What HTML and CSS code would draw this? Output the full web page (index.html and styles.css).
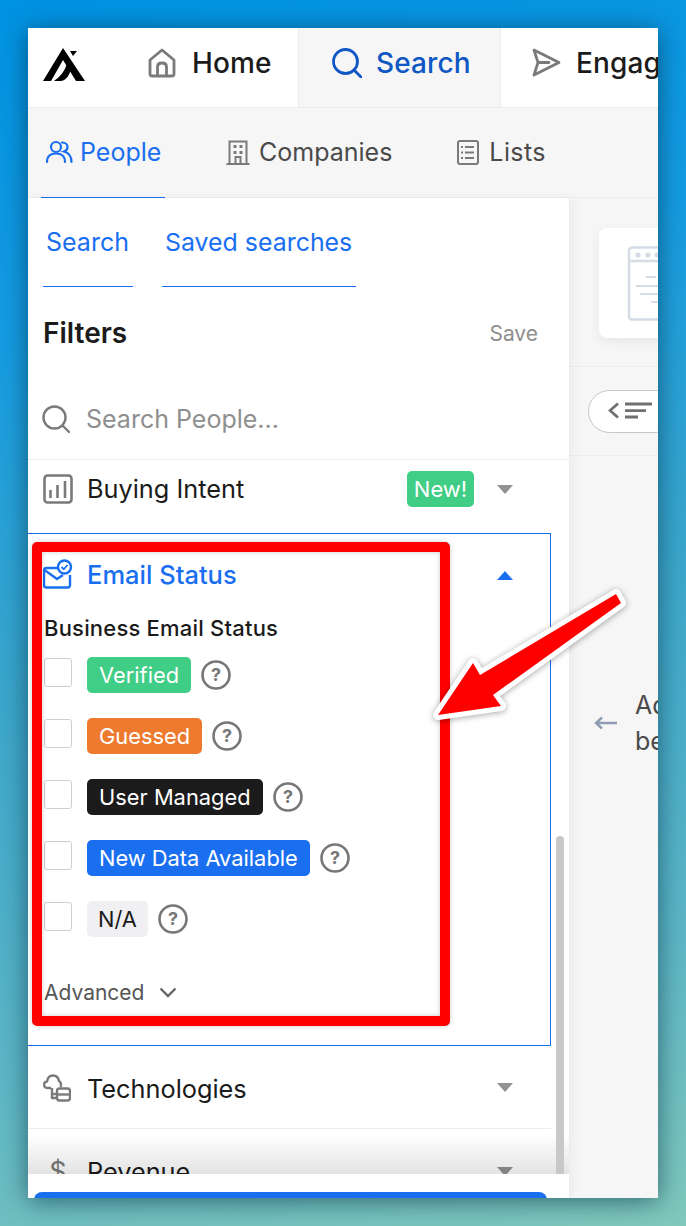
FILE: index.html
```html
<!DOCTYPE html>
<html lang="en">
<head>
<meta charset="utf-8">
<title>Search People</title>
<link rel="stylesheet" href="styles.css">
</head>
<body>
<div class="window">
  <header class="topbar">
    <div class="tab tab-home">
      <svg class="logo" viewBox="0 0 42 34" width="42" height="34"><path d="M0 34 L20 1 L42 34 H33 L20 13 L8 34Z" fill="#000"/><path d="M11 34 H18 C24 33 27 27 28 21 L24 15 C23 23 17 30 11 34Z" fill="#000"/><path d="M27 4 H34 L30 9Z" fill="#000"/></svg>
      <svg class="ic-main" viewBox="0 0 28 30" width="28" height="30"><path d="M2 12 L14 2 L26 12 V26 Q26 28 24 28 H4 Q2 28 2 26Z M9.500 28 V19 Q9.500 15 14 15 Q18.500 15 18.500 19 V28" fill="none" stroke="#7a7a7a" stroke-width="2.800" stroke-linejoin="round"/></svg>
      <span class="tab-label">Home</span>
    </div>
    <div class="tab tab-search">
      <svg viewBox="0 0 30 30" width="30" height="30"><circle cx="13.500" cy="13.500" r="12" fill="none" stroke="#0e57c4" stroke-width="2.800"/><path d="M22 22 L29 29" stroke="#0e57c4" stroke-width="2.800" stroke-linecap="round"/></svg>
      <span class="tab-label tab-label-active">Search</span>
    </div>
    <div class="tab tab-engage">
      <svg viewBox="0 0 30 30" width="30" height="30"><path d="M3 2 L28 14.500 L3 27 L7 14.500Z M7 14.500 H18" fill="none" stroke="#7a7a7a" stroke-width="2.800" stroke-linejoin="round" stroke-linecap="round"/></svg>
      <span class="tab-label">Engage</span>
    </div>
  </header>

  <nav class="subnav">
    <div class="sub sub-people">
      <svg viewBox="0 0 27 24" width="27" height="24"><g fill="none" stroke="#1a6ff0" stroke-width="2.200" stroke-linecap="round"><circle cx="10" cy="7" r="5"/><path d="M1 22 C1 16 5 13.500 10 13.500 C15 13.500 19 16 19 22"/><path d="M16 2.500 C20 2.500 21.500 5 21.500 7 C21.500 9.500 19.500 11 18 11.500 C22 12.500 25.500 15 25.500 22"/></g></svg>
      <span>People</span>
    </div>
    <div class="sub sub-companies">
      <svg viewBox="0 0 24 25" width="24" height="25"><g fill="none" stroke="#7a7a7a" stroke-width="2"><path d="M3.500 24 V1.500 H20.500 V24"/><path d="M0.500 24 H23.500"/><path d="M9.500 24 V17 H14.500 V24"/></g><g fill="#7a7a7a"><rect x="7.500" y="5" width="3" height="3"/><rect x="13.500" y="5" width="3" height="3"/><rect x="7.500" y="11" width="3" height="3"/><rect x="13.500" y="11" width="3" height="3"/></g></svg>
      <span>Companies</span>
    </div>
    <div class="sub sub-lists">
      <svg viewBox="0 0 22 25" width="22" height="25"><rect x="1" y="1" width="20" height="23" rx="2" fill="none" stroke="#7a7a7a" stroke-width="2"/><g stroke="#7a7a7a" stroke-width="1.800"><path d="M8 7 H17 M8 12.500 H17 M8 18 H17"/><path d="M4 7 H6 M4 12.500 H6 M4 18 H6"/></g></svg>
      <span class="sub-lists-label">Lists</span>
    </div>
  </nav>

  <div class="content">
    <aside class="sidebar">
      <div class="side-tabs">
        <span class="side-tab side-tab-search">Search</span>
        <span class="side-tab side-tab-saved">Saved searches</span>
      </div>
      <div class="filters-head">
        <span class="filters-title">Filters</span>
        <span class="filters-save">Save</span>
      </div>
      <div class="search-row">
        <svg viewBox="0 0 28 28" width="28" height="28"><circle cx="12.500" cy="12.500" r="11" fill="none" stroke="#7a7a7a" stroke-width="2.400"/><path d="M20.500 20.500 L27 27" stroke="#7a7a7a" stroke-width="2.400" stroke-linecap="round"/></svg>
        <span>Search People...</span>
      </div>
      <div class="scroll-area">
        <div class="filter filter-intent">
          <svg class="f-icon" viewBox="0 0 30 30" width="30" height="30"><rect x="1.500" y="1.500" width="27" height="27" rx="3" fill="none" stroke="#7a7a7a" stroke-width="2.600"/><path d="M7.500 24 V16 M14.500 24 V11 M22 24 V7" stroke="#7a7a7a" stroke-width="2.600"/></svg>
          <span class="f-name">Buying Intent</span>
          <span class="new-badge">New!</span>
          <span class="caret"></span>
        </div>
        <section class="filter-open">
          <div class="open-head">
            <svg class="f-icon" viewBox="0 0 30 30" width="30" height="30"><g fill="none" stroke="#1a6ff0" stroke-width="2.400" stroke-linejoin="round"><path d="M15 9 H3.500 Q1 9 1 11.500 V26 Q1 28.500 3.500 28.500 H24.500 Q27 28.500 27 26 V16"/><path d="M1.500 11 L14 20 L20 16"/><circle cx="21.500" cy="8" r="6.500"/></g><path d="M18.500 8 L20.800 10.300 L24.500 6" fill="none" stroke="#1a6ff0" stroke-width="1.800"/></svg>
            <span class="f-name f-name-open">Email Status</span>
            <span class="caret caret-up"></span>
          </div>
          <div class="status-title">Business Email Status</div>
          <ul class="status-list">
            <li class="status"><span class="check"></span><span class="pill pill-green">Verified</span><svg class="help" viewBox="0 0 30 30" width="30" height="30"><circle cx="15" cy="15" r="13.500" fill="none" stroke="#777" stroke-width="2.600"/><text x="15" y="21" text-anchor="middle" class="help-q">?</text></svg></li>
            <li class="status"><span class="check"></span><span class="pill pill-orange">Guessed</span><svg class="help" viewBox="0 0 30 30" width="30" height="30"><circle cx="15" cy="15" r="13.500" fill="none" stroke="#777" stroke-width="2.600"/><text x="15" y="21" text-anchor="middle" class="help-q">?</text></svg></li>
            <li class="status"><span class="check"></span><span class="pill pill-black">User Managed</span><svg class="help" viewBox="0 0 30 30" width="30" height="30"><circle cx="15" cy="15" r="13.500" fill="none" stroke="#777" stroke-width="2.600"/><text x="15" y="21" text-anchor="middle" class="help-q">?</text></svg></li>
            <li class="status"><span class="check"></span><span class="pill pill-blue">New Data Available</span><svg class="help" viewBox="0 0 30 30" width="30" height="30"><circle cx="15" cy="15" r="13.500" fill="none" stroke="#777" stroke-width="2.600"/><text x="15" y="21" text-anchor="middle" class="help-q">?</text></svg></li>
            <li class="status"><span class="check"></span><span class="pill pill-gray">N/A</span><svg class="help" viewBox="0 0 30 30" width="30" height="30"><circle cx="15" cy="15" r="13.500" fill="none" stroke="#777" stroke-width="2.600"/><text x="15" y="21" text-anchor="middle" class="help-q">?</text></svg></li>
          </ul>
          <div class="advanced"><span>Advanced</span><svg viewBox="0 0 18 11" width="18" height="11"><path d="M1.500 1.500 L9 9 L16.500 1.500" fill="none" stroke="#666" stroke-width="2.400"/></svg></div>
        </section>
        <div class="filter filter-tech">
          <svg class="f-icon" viewBox="0 0 28 28" width="28" height="28"><g fill="none" stroke="#7a7a7a" stroke-width="2.400" stroke-linejoin="round"><path d="M8 14 H5 Q1 14 1 10.500 Q1 8 4 7.500 Q5 1.500 10 1.500 Q15 1.500 16 7 Q18 8 18 11 Q18 12 17.500 13"/><path d="M9 14 V24 H14"/><path d="M9 20 H14"/><rect x="14" y="14.500" width="13" height="12" rx="2.500"/><path d="M14 20.500 H27"/></g></svg>
          <span class="f-name">Technologies</span>
          <span class="caret"></span>
        </div>
        <div class="filter filter-revenue">
          <span class="dollar">$</span>
          <span class="f-name">Revenue</span>
          <span class="caret"></span>
        </div>
        <div class="scrollbar"></div>
      </div>
      <div class="side-foot"><div class="apply-btn"></div></div>
    </aside>
    <main class="panel">
      <div class="panel-top">
        <div class="card">
          <svg viewBox="0 0 60 90" width="60" height="90"><g fill="none" stroke="#d5dce6" stroke-width="2.500"><rect x="30" y="1.500" width="60" height="72" rx="3"/><path d="M30 15 H90"/></g><g fill="#d5dce6"><circle cx="39" cy="9" r="2.600"/><circle cx="49" cy="9" r="2.600"/><circle cx="58" cy="9" r="2.600"/></g><path d="M47 31 H57 M37 40 H60 M41 48 H60 M52 56 H60" stroke="#d5dce6" stroke-width="2.200" fill="none"/></svg>
        </div>
      </div>
      <div class="panel-bar">
        <div class="collapse">
          <svg viewBox="0 0 46 18" width="46" height="18"><path d="M10 1.500 L2 8.500 L10 15.500" fill="none" stroke="#707070" stroke-width="2.800"/><path d="M17 2 H44 M17 8.700 H38 M17 15 H30" stroke="#707070" stroke-width="2.800"/></svg>
        </div>
      </div>
      <div class="panel-hint">
        <svg viewBox="0 0 24 14" width="24" height="14"><path d="M23 7 H2 M8 1.500 L2 7 L8 12.500" fill="none" stroke="#8f9cb3" stroke-width="2.400"/></svg>
        <p class="hint-text">Add<br>be</p>
      </div>
    </main>
  </div>

  <div class="redbox"></div>
  <svg class="arrow" viewBox="0 0 200 130" width="200" height="130"><path d="M185 4 L49 85 L42 73 L7 125 L70 116 L62 105 L190 13 Z" fill="#f00" stroke="#fff" stroke-width="10" stroke-linejoin="round" paint-order="stroke"/></svg>
</div>
</body>
</html>
```

FILE: styles.css
```css
* { box-sizing: border-box; }
html, body { margin: 0; height: 100%; }
body {
  width: 686px;
  height: 1226px;
  padding: 28px;
  overflow: hidden;
  background: linear-gradient(168deg, #0092e2 0%, #159ce2 25%, #3aa6cc 50%, #5cb6c6 78%, #80c8bc 100%);
  font-family: Inter, "Liberation Sans", sans-serif;
  color: #1b1b1b;
}
.window {
  position: relative;
  width: 630px;
  height: 1170px;
  background: #f6f6f6;
  overflow: hidden;
  box-shadow: 0 3px 24px rgba(0, 40, 60, 0.6);
  display: flex;
  flex-direction: column;
}

/* top bar */
.topbar {
  display: flex;
  height: 80px;
  flex: none;
  background: #fff;
  border-bottom: 1px solid #ececec;
}
.tab {
  display: flex;
  align-items: center;
  height: 79px;
  padding-bottom: 10px;
  flex: none;
}
.tab-home { width: 271px; padding-left: 15px; border-right: 1px solid #ececec; }
.logo { margin-right: 63px; margin-top: 2px; }
.ic-main { margin-right: 16px; }
.tab-search { width: 202px; padding-left: 33px; gap: 14px; background: #f6f6f6; border-right: 1px solid #ececec; }
.tab-engage { padding-left: 30px; gap: 15px; }
.tab-label { font-size: 28px; font-weight: 500; color: #1b1b1b; letter-spacing: 0.1px; }
.tab-label-active { color: #0e57c4; }

/* sub nav */
.subnav {
  display: flex;
  align-items: stretch;
  flex: none;
  height: 90px;
  padding-left: 13px;
  font-size: 25px;
  color: #4a4a4a;
  border-bottom: 1px solid #ececec;
}
.sub { display: flex; align-items: center; padding-bottom: 1px; }
.sub-people { width: 124px; gap: 7px; padding-left: 5px; color: #1a6ff0; border-bottom: 1px solid #1a6ff0; height: 90px; }
.sub-companies { margin-left: 61px; gap: 9px; }
.sub-lists { margin-left: 65px; gap: 10px; }
.sub-lists-label { letter-spacing: 0.4px; }

/* content */
.content { flex: 1; display: flex; min-height: 0; }
.sidebar {
  position: relative;
  width: 542px;
  flex: none;
  background: #fff;
  display: flex;
  flex-direction: column;
  border-right: 1px solid #ececec;
  box-shadow: 4px 0 10px rgba(0, 0, 0, 0.04);
}
.side-tabs { display: flex; flex: none; height: 89px; padding-left: 15px; font-size: 25px; color: #1a6ff0; }
.side-tab { display: flex; align-items: center; border-bottom: 1px solid #1a6ff0; }
.side-tab-search { width: 90px; padding-left: 3px; }
.side-tab-saved { width: 194px; margin-left: 29px; padding-left: 3px; font-size: 24.900px; }

.filters-head { display: flex; justify-content: space-between; align-items: center; flex: none; height: 92px; padding: 0 31px 0 15px; }
.filters-title { font-size: 28px; font-weight: 600; }
.filters-save { font-size: 21px; color: #8e8e8e; }
.search-row { display: flex; align-items: center; gap: 16px; flex: none; height: 80px; padding: 0 14px; font-size: 25px; color: #8f8f8f; }

.scroll-area { position: relative; flex: 1; min-height: 0; border-top: 1px solid #ececec; overflow: hidden; }
.filter { position: relative; display: flex; align-items: center; width: 523px; padding-left: 15px; font-size: 25.300px; }
.f-icon { flex: none; }
.f-name { margin-left: 14px; }
.caret { position: absolute; left: 469px; width: 0; height: 0; border-left: 8px solid transparent; border-right: 8px solid transparent; border-top: 9px solid #929292; }
.caret-up { border-top: 0; border-bottom: 9px solid #1a6ff0; left: 469px; }
.filter-intent { height: 73px; padding-bottom: 16px; }
.new-badge { position: absolute; left: 379px; top: 11px; width: 67px; height: 36px; border-radius: 5px; background: #40cd85; color: #fff; font-size: 22px; display: flex; align-items: center; justify-content: center; }
.filter-intent .caret { top: 25px; }

.filter-open { position: relative; width: 523px; height: 513px; border: 1px solid #1a6ff0; border-left: 0; padding-left: 15px; }
.open-head { display: flex; align-items: center; height: 68px; padding-top: 12px; color: #1a6ff0; font-size: 25.500px; }
.f-name-open { color: #1a6ff0; font-weight: 500; }
.open-head .caret-up { top: 37px; }
.status-title { font-size: 22px; font-weight: 500; margin: 13px 0 0 1px; line-height: 26px; letter-spacing: 0.2px; }
.status-list { list-style: none; margin: 3px 0 0; padding: 0 0 0 1px; }
.status { display: flex; align-items: center; height: 61px; }
.check { width: 28px; height: 29px; margin-right: 15px; margin-bottom: 4px; border: 1px solid #cfcfcf; border-radius: 3px; background: #fff; flex: none; }
.pill { display: flex; align-items: center; height: 36px; padding: 0 12px; border-radius: 5px; font-size: 21.850px; color: #fff; }
.pill-green { background: #40cd85; }
.pill-orange { background: #ee7a30; }
.pill-black { background: #1b1b1b; }
.pill-blue { background: #1a6ff0; }
.pill-gray { background: #f0f0f2; color: #1b1b1b; padding: 0 11px; }
.help { margin-left: 10px; flex: none; }
.help-q { font-size: 18px; font-weight: 700; fill: #777; font-family: Inter, "Liberation Sans", sans-serif; }
.advanced { display: flex; align-items: center; gap: 15px; margin: 31px 0 0 1px; font-size: 21px; color: #555; }

.filter-tech { height: 83px; padding-top: 2px; border-bottom: 1px solid #ececec; }
.filter-tech .f-icon { margin-right: 2px; }
.filter-tech .caret { top: 37px; }
.filter-revenue { height: 80px; padding-top: 4px; }
.filter-revenue .caret { top: 38px; }
.dollar { width: 30px; text-align: center; font-size: 27px; color: #7a7a7a; flex: none; }

.scroll-area::after { content: ""; position: absolute; left: 0; right: 0; bottom: 0; height: 40px; background: linear-gradient(rgba(0, 0, 0, 0), rgba(0, 0, 0, 0.11)); }
.scrollbar { position: absolute; z-index: 1; left: 528px; bottom: 0; width: 8px; height: 338px; background: #c8c8ca; border-radius: 4px 4px 0 0; }

.side-foot { flex: none; height: 24px; background: #fff; padding: 18px 22px 0 6px; overflow: hidden; }
.apply-btn { height: 30px; border-radius: 8px 8px 0 0; background: #1a6ff0; }

/* right panel */
.panel { flex: 1; min-width: 0; overflow: hidden; }
.panel-top { height: 169px; padding-top: 30px; padding-left: 29px; border-bottom: 1px solid #ececec; }
.card { width: 120px; height: 110px; padding-top: 18px; background: #fff; border-radius: 8px; box-shadow: 0 4px 12px rgba(0, 0, 0, 0.06); }
.card svg { display: block; }
.panel-bar { height: 89px; padding: 23px 0 0 18px; border-bottom: 1px solid #ececec; }
.collapse { width: 90px; height: 43px; border: 1px solid #c6c6c6; border-radius: 22px; background: #fff; padding: 11px 0 0 19px; }
.collapse svg { display: block; }
.panel-hint { display: flex; align-items: center; gap: 17px; margin-top: 231px; padding-left: 24px; }
.panel-hint svg { flex: none; }
.hint-text { flex: none; margin: 0; width: 200px; font-size: 25px; line-height: 36px; color: #4a4a4a; }

/* annotation overlay */
.redbox { position: absolute; left: 4px; top: 514px; width: 418px; height: 484px; border: 10px solid #f00; border-radius: 5px; box-shadow: 0 0 5px rgba(0, 0, 0, 0.2), inset 0 0 5px rgba(0, 0, 0, 0.2); }
.arrow { position: absolute; left: 403px; top: 562px; overflow: visible; filter: drop-shadow(0 1px 3px rgba(0, 0, 0, 0.35)); }
```
